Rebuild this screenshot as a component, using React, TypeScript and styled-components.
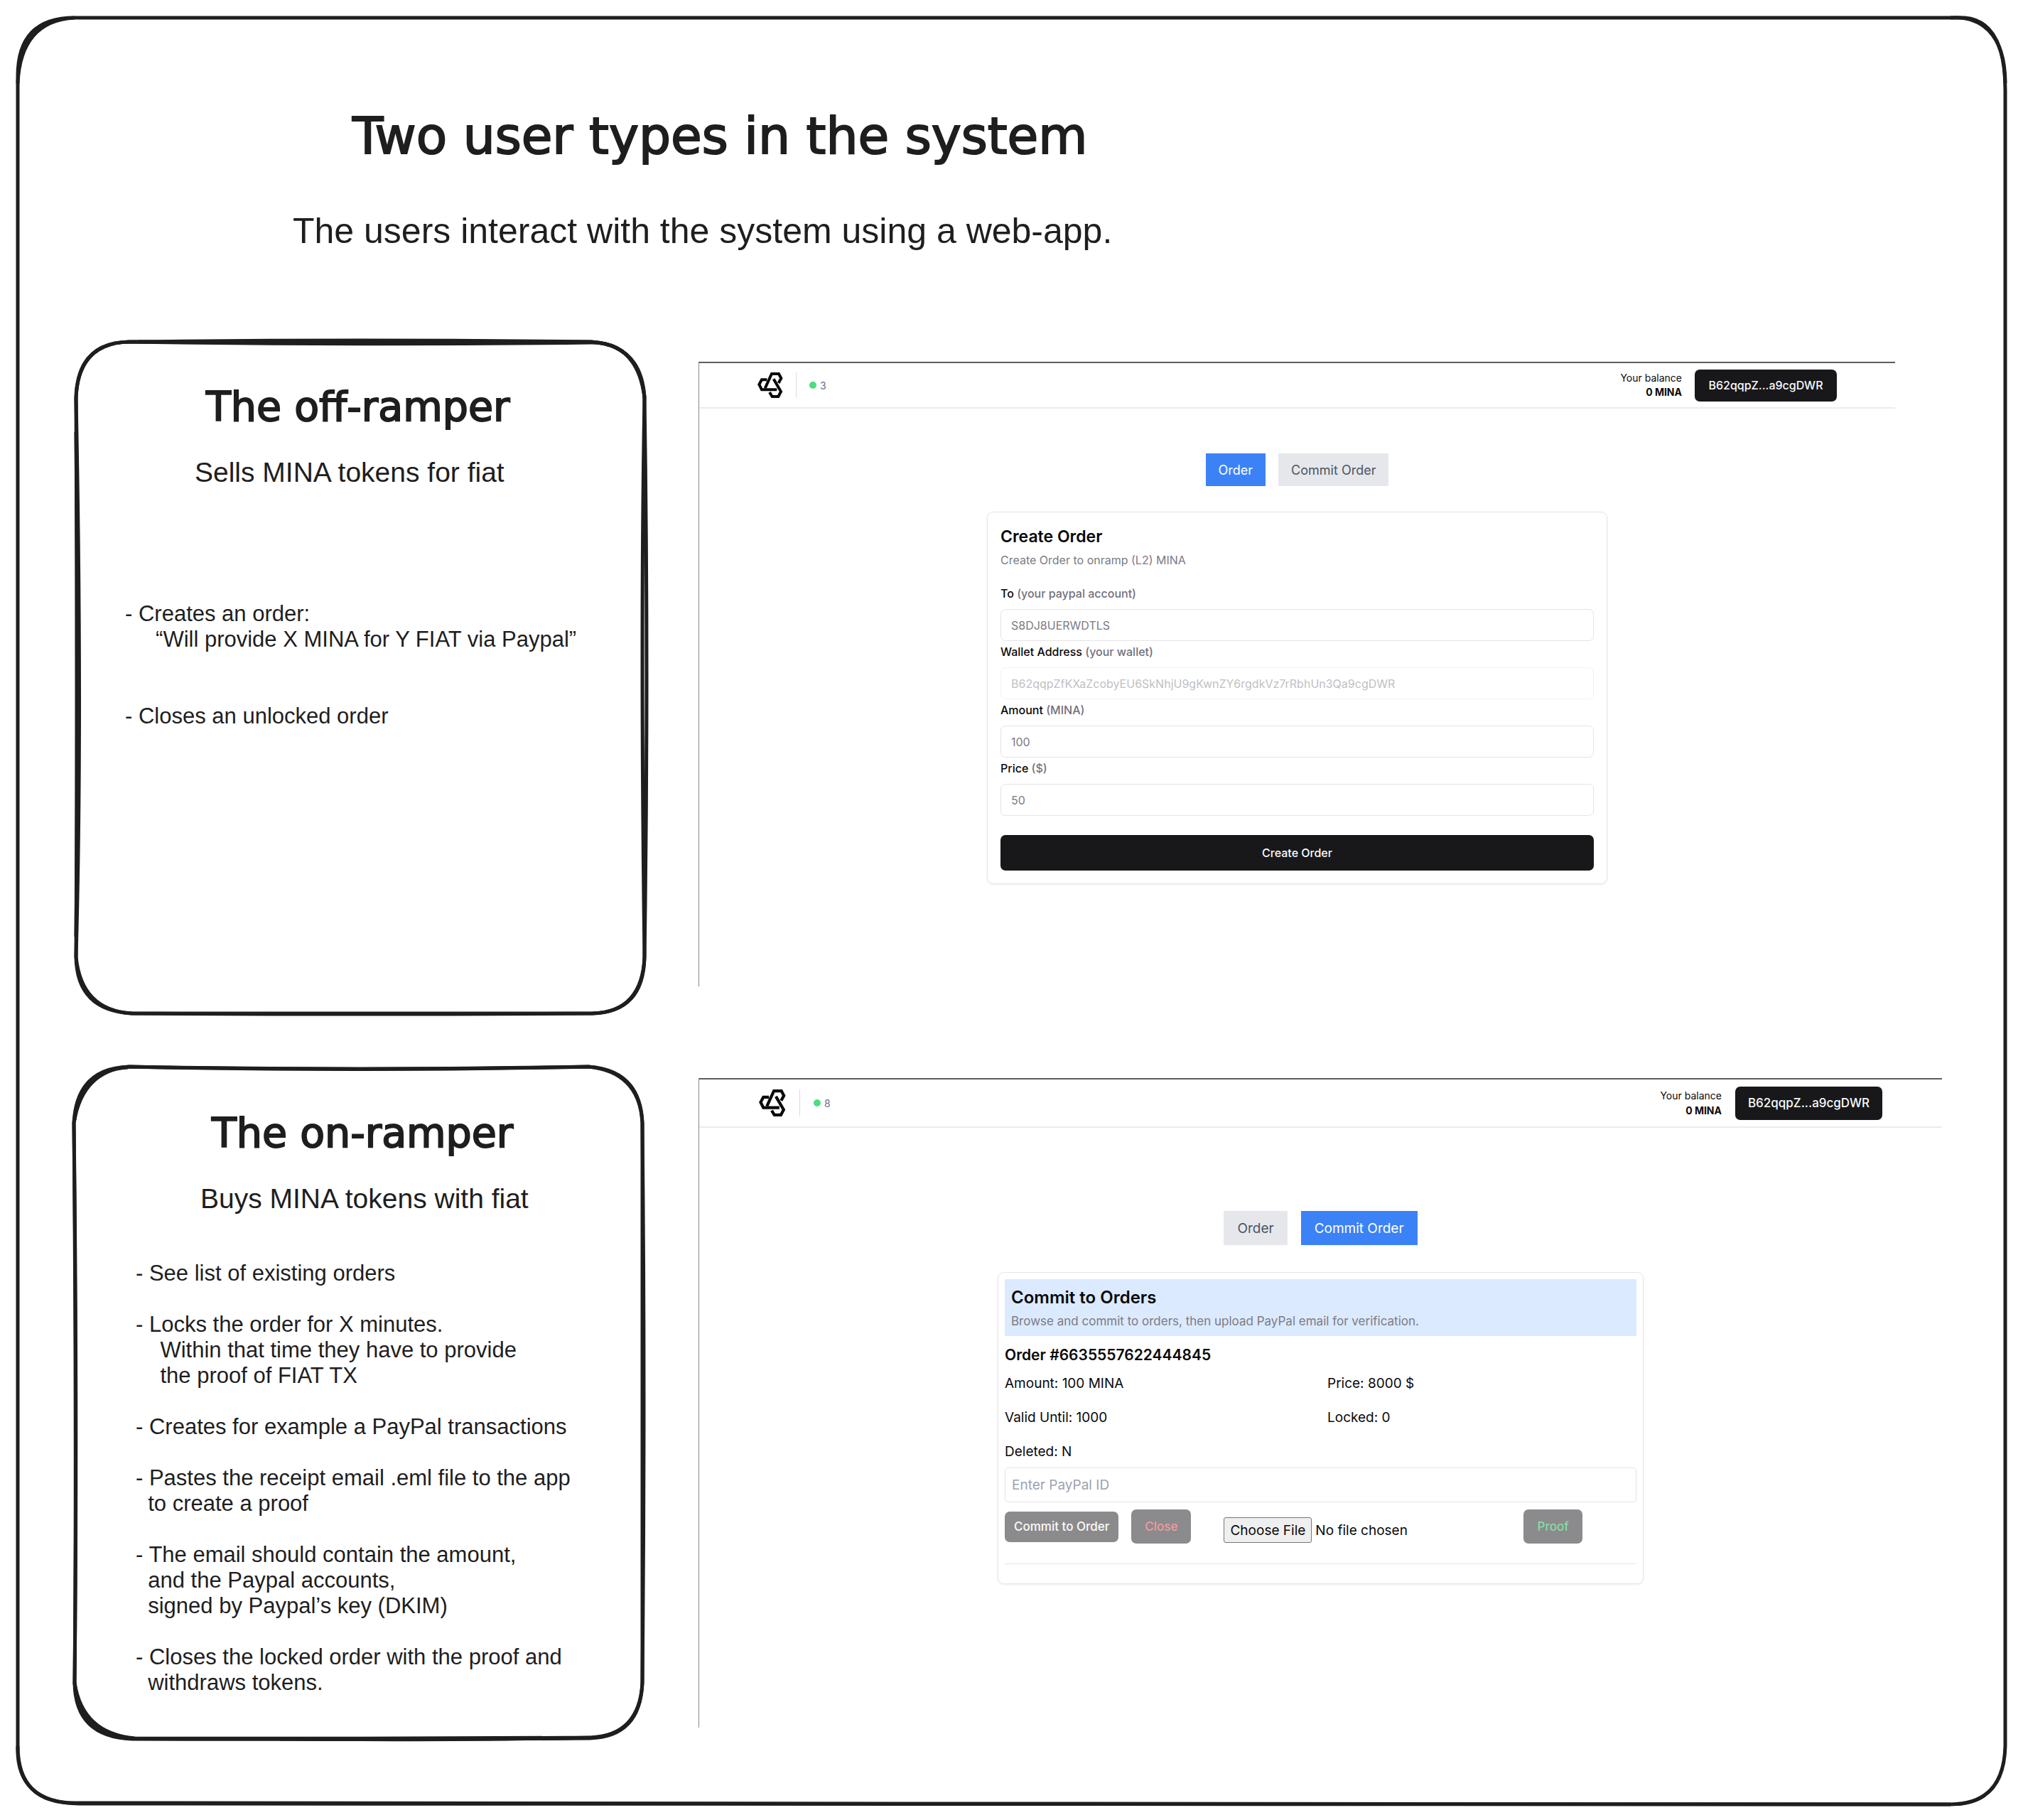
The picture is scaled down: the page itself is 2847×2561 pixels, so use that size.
import React from "react";
import styled, { createGlobalStyle, css, ThemeProvider } from "styled-components";

const ink = "#1e1e1e";
const sans = `"Liberation Sans", Arial, sans-serif`;
const hand = `Virgil, Excalifont, "DejaVu Sans", cursive`;
const ui = `Inter, "Noto Sans", sans-serif`;

const GlobalStyle = createGlobalStyle`
  *, *::before, *::after { box-sizing: border-box; }
  body { margin: 0; background: #ffffff; color: ${ink}; font-family: ${sans}; }
  h1, h2, h3, h4, p, ul { margin: 0; padding: 0; font-weight: 400; }
  button, input { font: inherit; margin: 0; }
`;

/* ---------- hand-drawn board ---------- */

const Board = styled.main`
  position: relative;
  margin: 22px;
  padding: 130px 92px 92px 82px;
`;

const Outline = styled.svg`
  position: absolute;
  inset: 0;
  width: 100%;
  height: 100%;
  overflow: visible;
  pointer-events: none;
  fill: none;
  stroke: ${ink};
`;

const Intro = styled.header`
  padding-left: 308px;
  height: 326px;
`;

const BoardTitle = styled.h1`
  padding-left: 84px;
  font: 400 71px/80px ${hand};
  -webkit-text-stroke: 2px ${ink};
`;

const BoardLead = styled.p`
  margin-top: 64px;
  font-size: 50px;
  line-height: 58px;
`;

const Flow = styled.section`
  display: grid;
  grid-template-columns: minmax(0, 806fr) minmax(0, 1750fr);
  column-gap: 73px;
  align-items: start;
  & + & {
    margin-top: 72px;
  }
`;

const Role = styled.article`
  position: relative;
  min-height: 950px;
  padding: 62px 0 40px;
`;

const RoleHead = styled.header<{ $indent: number }>`
  padding-left: ${(p) => p.$indent}px;
`;

const RoleName = styled.h2`
  padding-left: 16px;
  font: 400 57px/64px ${hand};
  -webkit-text-stroke: 2px ${ink};
  white-space: nowrap;
`;

const RoleLead = styled.p`
  margin-top: 38px;
  font-size: 39px;
  line-height: 46px;
`;

const Steps = styled.ul<{ $top: number; $gap: number; $indent: number }>`
  display: grid;
  gap: ${(p) => p.$gap}px;
  margin-top: ${(p) => p.$top}px;
  padding-left: ${(p) => p.$indent}px;
  list-style: none;
  font-size: 31px;
  line-height: 36px;
  white-space: pre;
`;

/* ---------- embedded application windows ---------- */

const offRampMetrics = {
  top: 31,
  right: 66,
  height: 879,
  bar: 66,
  side: 82,
  logo: 36,
  gap: 18,
  pad: 18,
  tiny: 14,
  small: 16,
  text: 18,
  title: 23,
  control: 46,
  tabsTop: 63,
  cardTop: 36,
  card: 873,
  wallet: 200,
  balanceLine: 20,
};

const onRampMetrics = {
  ...offRampMetrics,
  top: 17,
  right: 0,
  height: 914,
  bar: 70,
  side: 84,
  logo: 38,
  gap: 19,
  pad: 9,
  small: 17,
  text: 19,
  title: 24,
  control: 48,
  tabsTop: 117,
  cardTop: 38,
  card: 909,
  wallet: 207,
  balanceLine: 21,
};

const AppWindow = styled.section`
  min-height: ${(p) => p.theme.height}px;
  margin: ${(p) => p.theme.top}px ${(p) => p.theme.right}px 0 0;
  border-top: 2px solid #5c5c5f;
  border-left: 1px solid #8a8a8c;
  color: #09090b;
  font-family: ${ui};
`;

const TopBar = styled.header`
  display: flex;
  align-items: center;
  gap: ${(p) => p.theme.gap}px;
  height: ${(p) => p.theme.bar - 2}px;
  padding: 0 ${(p) => p.theme.side}px;
  border-bottom: 2px solid #ececed;
`;

const Logo = styled.svg`
  width: ${(p) => p.theme.logo}px;
  height: ${(p) => p.theme.logo}px;
  fill: none;
  stroke: #0a0a0a;
  stroke-width: 12;
`;

const Rule = styled.span`
  width: 1px;
  height: ${(p) => p.theme.logo}px;
  background: #dcdce0;
`;

const Status = styled.span`
  display: flex;
  align-items: center;
  gap: 5px;
  color: #64748b;
  font-size: ${(p) => p.theme.tiny}px;
  &::before {
    content: "";
    width: 10px;
    height: 10px;
    border-radius: 50%;
    background: #4ade80;
  }
`;

const Balance = styled.p`
  margin-left: auto;
  text-align: right;
  font-size: ${(p) => p.theme.tiny}px;
  line-height: ${(p) => p.theme.balanceLine}px;
  strong {
    display: block;
    font-weight: 700;
  }
`;

const DarkButton = styled.button`
  padding: 0;
  border: 0;
  border-radius: 7px;
  background: #18181b;
  color: #fafafa;
  font-size: ${(p) => p.theme.small}px;
  font-weight: 500;
`;

const WalletButton = styled(DarkButton)`
  width: ${(p) => p.theme.wallet}px;
  height: ${(p) => p.theme.control - 1}px;
`;

const Tabs = styled.nav`
  display: flex;
  justify-content: center;
  gap: ${(p) => p.theme.gap}px;
  margin-top: ${(p) => p.theme.tabsTop}px;
`;

const Tab = styled.button<{ $active?: boolean }>`
  height: ${(p) => p.theme.control}px;
  padding: 0 ${(p) => p.theme.gap}px;
  border: 0;
  font-size: ${(p) => p.theme.text}px;
  background: ${(p) => (p.$active ? "#3b82f6" : "#e5e7eb")};
  color: ${(p) => (p.$active ? "#ffffff" : "#4b5563")};
`;

const Card = styled.div`
  max-width: ${(p) => p.theme.card}px;
  margin: ${(p) => p.theme.cardTop}px auto 0;
  padding: ${(p) => p.theme.pad}px;
  border: 1px solid #e6e6e9;
  border-radius: 9px;
  box-shadow: 0 1px 3px rgba(0, 0, 0, 0.08);
`;

const CardHead = styled.div<{ $tinted?: boolean }>`
  padding: 2px 0 0;
  ${(p) =>
    p.$tinted &&
    css`
      padding: 12px 9px 9px;
      background: #dbeafe;
    `}
`;

const CardTitle = styled.h3`
  font-size: ${(p) => p.theme.title}px;
  font-weight: 600;
  line-height: 28px;
`;

const CardText = styled.p`
  margin-top: 7px;
  color: #7b7b84;
  font-size: ${(p) => p.theme.small}px;
  line-height: 24px;
`;

const Form = styled.form`
  margin-top: 24px;
`;

const Field = styled.div`
  margin-bottom: 4px;
`;

const Label = styled.label`
  display: block;
  margin-bottom: 11px;
  font-size: 16px;
  font-weight: 500;
  line-height: 22px;
  span {
    color: #71717a;
  }
`;

const TextBox = styled.input`
  display: block;
  width: 100%;
  height: 45px;
  padding: 0 14px;
  border: 1px solid #e4e4e7;
  border-radius: 7px;
  background: #ffffff;
  color: #7b7b84;
  font-size: 16px;
  &:disabled {
    border-color: #f1f1f3;
    color: #bfbfc4;
  }
`;

const Submit = styled(DarkButton)`
  width: 100%;
  height: 50px;
  margin-top: 23px;
`;

const OrderName = styled.h4`
  margin-top: 12px;
  font-size: 21px;
  font-weight: 600;
  line-height: 29px;
`;

const Facts = styled.div`
  display: grid;
  grid-template-columns: 1fr 1fr;
  gap: 19px;
  margin-top: 11px;
  font-size: 19px;
  line-height: 29px;
`;

const PaypalBox = styled(TextBox)`
  height: 49px;
  margin-top: 8px;
  padding: 0 9px;
  border-radius: 5px;
  font-size: 19px;
  &::placeholder {
    color: #9ca3af;
    opacity: 1;
  }
`;

const Actions = styled.div`
  display: flex;
  align-items: center;
  gap: 18px;
  margin-top: 10px;
  padding-bottom: 28px;
  border-bottom: 1px solid #e5e5e8;
`;

const MutedButton = styled(DarkButton)<{ $tone: string; $tall?: boolean }>`
  height: ${(p) => (p.$tall ? 48 : 43)}px;
  padding: 0 ${(p) => (p.$tall ? 19 : 13)}px;
  background: #8b8b8d;
  color: ${(p) => p.$tone};
  white-space: nowrap;
`;

const FileBox = styled.input`
  width: 432px;
  min-width: 0;
  padding: 10px 0 0 28px;
  font-size: 19px;
  &::file-selector-button {
    height: 36px;
    padding: 0 8px;
    border: 1px solid #767676;
    border-radius: 3px;
    background: #efefef;
    color: #09090b;
    font: inherit;
    margin-right: 5px;
  }
`;

const CardFoot = styled.div`
  height: 18px;
`;

function MinaLogo() {
  return (
    <Logo viewBox="0 0 108 108" aria-hidden="true">
      <path d="M32 67 L60 6 H90 L100 25 L89 45" />
      <path d="M68 28 L99 81 L88 102 H62 L51 84" />
      <path d="M82 73 H18 L7 51 L18 31 H40" />
    </Logo>
  );
}

type ShellProps = {
  metrics: typeof offRampMetrics;
  peers: number;
  tab: "order" | "commit";
  children: React.ReactNode;
};

function Shell({ metrics, peers, tab, children }: ShellProps) {
  return (
    <ThemeProvider theme={metrics}>
      <AppWindow>
        <TopBar>
          <MinaLogo />
          <Rule />
          <Status>{peers}</Status>
          <Balance>
            Your balance<strong>0 MINA</strong>
          </Balance>
          <WalletButton type="button">B62qqpZ...a9cgDWR</WalletButton>
        </TopBar>
        <Tabs>
          <Tab type="button" $active={tab === "order"}>Order</Tab>
          <Tab type="button" $active={tab === "commit"}>Commit Order</Tab>
        </Tabs>
        <Card>{children}</Card>
      </AppWindow>
    </ThemeProvider>
  );
}

const fields = [
  { id: "to", label: "To", hint: "(your paypal account)", value: "S8DJ8UERWDTLS" },
  {
    id: "wallet",
    label: "Wallet Address",
    hint: "(your wallet)",
    value: "B62qqpZfKXaZcobyEU6SkNhjU9gKwnZY6rgdkVz7rRbhUn3Qa9cgDWR",
    disabled: true,
  },
  { id: "amount", label: "Amount", hint: "(MINA)", value: "100" },
  { id: "price", label: "Price", hint: "($)", value: "50" },
];

function CreateOrder() {
  return (
    <Shell metrics={offRampMetrics} peers={3} tab="order">
      <CardHead>
        <CardTitle>Create Order</CardTitle>
        <CardText>Create Order to onramp (L2) MINA</CardText>
      </CardHead>
      <Form onSubmit={(e) => e.preventDefault()}>
        {fields.map((f) => (
          <Field key={f.id}>
            <Label htmlFor={f.id}>
              {f.label} <span>{f.hint}</span>
            </Label>
            <TextBox id={f.id} defaultValue={f.value} disabled={f.disabled} />
          </Field>
        ))}
        <Submit type="submit">Create Order</Submit>
      </Form>
    </Shell>
  );
}

const facts = ["Amount: 100 MINA", "Price: 8000 $", "Valid Until: 1000", "Locked: 0", "Deleted: N"];

function CommitOrder() {
  return (
    <Shell metrics={onRampMetrics} peers={8} tab="commit">
      <CardHead $tinted>
        <CardTitle>Commit to Orders</CardTitle>
        <CardText>Browse and commit to orders, then upload PayPal email for verification.</CardText>
      </CardHead>
      <OrderName>Order #6635557622444845</OrderName>
      <Facts>
        {facts.map((f) => (
          <p key={f}>{f}</p>
        ))}
      </Facts>
      <PaypalBox aria-label="PayPal ID" placeholder="Enter PayPal ID" />
      <Actions>
        <MutedButton type="button" $tone="#fafafa">Commit to Order</MutedButton>
        <MutedButton type="button" $tone="#f19a9a" $tall>Close</MutedButton>
        <FileBox type="file" aria-label="Email file" />
        <MutedButton type="button" $tone="#86dca4" $tall>Proof</MutedButton>
      </Actions>
      <CardFoot />
    </Shell>
  );
}

const offRampSteps = [
  "- Creates an order:\n     “Will provide X MINA for Y FIAT via Paypal”",
  "- Closes an unlocked order",
];

const onRampSteps = [
  "- See list of existing orders",
  "- Locks the order for X minutes.\n    Within that time they have to provide\n    the proof of FIAT TX",
  "- Creates for example a PayPal transactions",
  "- Pastes the receipt email .eml file to the app\n  to create a proof",
  "- The email should contain the amount,\n  and the Paypal accounts,\n  signed by Paypal’s key (DKIM)",
  "- Closes the locked order with the proof and\n  withdraws tokens.",
];

export default function App() {
  return (
    <>
      <GlobalStyle />
      <Board>
        <Outline viewBox="0 0 2803 2518" preserveAspectRatio="none" strokeWidth="5" aria-hidden="true">
          <path d="M83 3 H2743 Q2800 8 2800 105 V2433 Q2798 2515 2723 2515 L83 2513 Q3 2513 3 2433 V85 Q3 3 83 3Z" />
          <path d="M83 3 Q7 7 3 95" />
          <path d="M2723 3 C2765 0 2800 25 2800 95" />
          <path d="M3 2433 Q0 2513 90 2514 L2723 2515" />
        </Outline>

        <Intro>
          <BoardTitle>Two user types in the system</BoardTitle>
          <BoardLead>The users interact with the system using a web-app.</BoardLead>
        </Intro>

        <Flow>
          <Role>
            <Outline viewBox="0 0 806 950" preserveAspectRatio="none" strokeWidth="5" aria-hidden="true">
              <path d="M78 3 Q400 -1 728 3 Q799 8 803 82 Q809 470 803 870 Q801 946 730 948 Q400 950 82 948 Q4 944 3 868 Q5 500 3 82 Q6 4 78 3Z" />
              <path d="M78 3 Q400 8 728 4 Q792 3 803 80 Q797 420 803 868 Q800 946 730 948 Q400 947 82 948 Q10 944 3 868 Q12 540 3 82 Q5 4 78 3Z" />
              <path d="M90 3 Q400 2 728 3" />
              <path d="M3 130 Q7 500 3 840" />
              <path d="M728 3 Q796 6 803 82" />
            </Outline>
            <RoleHead $indent={170}>
              <RoleName>The off-ramper</RoleName>
              <RoleLead>Sells MINA tokens for fiat</RoleLead>
            </RoleHead>
            <Steps $top={158} $gap={72} $indent={72}>
              {offRampSteps.map((s) => (
                <li key={s}>{s}</li>
              ))}
            </Steps>
          </Role>
          <CreateOrder />
        </Flow>

        <Flow>
          <Role>
            <Outline viewBox="0 0 806 950" preserveAspectRatio="none" strokeWidth="5" aria-hidden="true">
              <path d="M78 1 Q400 8 724 1 Q797 6 800 80 Q804 470 800 868 Q797 944 726 946 Q400 948 82 947 Q2 944 1 868 Q5 500 0 80 Q4 3 78 1Z" />
              <path d="M78 1 Q400 7 724 1 Q796 8 800 80 Q801 420 800 868 Q796 943 726 945 Q400 947 86 946 Q12 940 1 868 Q4 540 0 80 Q12 6 78 1Z" />
              <path d="M290 947 Q540 949 726 945" />
              <path d="M82 946 Q8 942 1 868" />
              <path d="M76 2 Q8 6 1 76" />
            </Outline>
            <RoleHead $indent={178}>
              <RoleName>The on-ramper</RoleName>
              <RoleLead>Buys MINA tokens with fiat</RoleLead>
            </RoleHead>
            <Steps $top={64} $gap={36} $indent={87}>
              {onRampSteps.map((s) => (
                <li key={s}>{s}</li>
              ))}
            </Steps>
          </Role>
          <CommitOrder />
        </Flow>
      </Board>
    </>
  );
}
